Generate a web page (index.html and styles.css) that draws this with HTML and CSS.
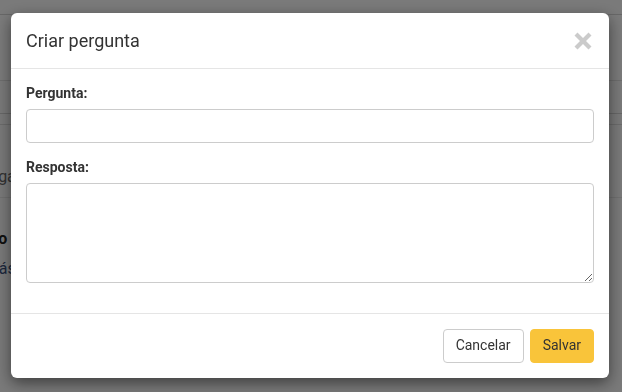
FILE: index.html
```html
<!DOCTYPE html>
<html lang="pt-BR">
<head>
    <meta charset="UTF-8">
    <meta name="viewport" content="width=device-width, initial-scale=1.0">
    <title>Perguntas frequentes</title>
    <link rel="stylesheet" href="styles.css">
</head>
<body>
    <!-- página por trás do modal -->
    <div class="page">
        <div class="strip strip-top"></div>
        <div class="strip strip-nav"></div>
        <div class="strip strip-tabs"></div>
        <div class="strip strip-gap"></div>
        <div class="page-row">
            <span class="page-text">Navegar</span>
        </div>
        <div class="page-item">
            <p class="item-title">Como</p>
            <p class="item-sub">Pagás</p>
        </div>
    </div>

    <div class="backdrop"></div>

    <div class="modal">
        <div class="modal-header">
            <h4 class="modal-title">Criar pergunta</h4>
            <button type="button" class="close" aria-label="Fechar">
                <svg width="18" height="18" viewBox="0 0 18 18">
                    <path d="M3.5 0.5 L9 6 L14.5 0.5 L17.5 3.5 L12 9 L17.5 14.5 L14.5 17.5 L9 12 L3.5 17.5 L0.5 14.5 L6 9 L0.5 3.5 Z" fill="#cbcbcb"/>
                </svg>
            </button>
        </div>
        <form class="modal-body">
            <div class="form-group">
                <label for="pergunta">Pergunta:</label>
                <input type="text" id="pergunta" class="form-control">
            </div>
            <div class="form-group">
                <label for="resposta">Resposta:</label>
                <textarea id="resposta" class="form-control"></textarea>
            </div>
        </form>
        <div class="modal-footer">
            <button type="button" class="btn btn-default">Cancelar</button>
            <button type="button" class="btn btn-warning">Salvar</button>
        </div>
    </div>
</body>
</html>
```

FILE: styles.css
```css
/* base */
* {
    box-sizing: border-box;
}

body {
    margin: 0;
    font-family: Roboto, "Liberation Sans", sans-serif;
    font-size: 14px;
    line-height: 1.42857;
    color: #333;
    background: #f5f5f5;
    overflow: hidden;
}

/* página de fundo */
.page {
    height: 392px;
}

.strip {
    border-bottom: 1px solid #dcdcdc;
}

.strip-top {
    height: 15px;
    border-bottom-color: #cfcfcf;
}

.strip-nav {
    height: 66px;
    background: #f7f7f7;
}

.strip-tabs {
    height: 33px;
    border-bottom-color: #cfcfcf;
}

.strip-gap {
    height: 11px;
    border-bottom-color: #d8d8d8;
}

.page-row {
    height: 73px;
    padding-top: 41px;
    border-bottom: 1px solid #e2e2e2;
}

.page-text {
    margin-left: -38px;
    color: #666;
    font-size: 16px;
}

.page-item {
    padding-top: 30px;
}

.item-title {
    margin: 0 0 7px -35px;
    font-size: 16px;
    font-weight: 700;
    color: #222;
}

.item-sub {
    margin: 0 0 0 -29px;
    font-size: 16px;
    color: #3a4f7a;
}

.backdrop {
    position: fixed;
    inset: 0;
    background: rgba(0, 0, 0, 0.5);
}

/* modal */
.modal {
    position: fixed;
    top: 13px;
    left: 11px;
    width: 598px;
    background: #fff;
    border-radius: 6px;
    box-shadow: 0 5px 15px rgba(0, 0, 0, 0.5);
}

.modal-header {
    display: flex;
    align-items: center;
    justify-content: space-between;
    padding: 15px;
    border-bottom: 1px solid #e5e5e5;
}

.modal-title {
    margin: 0;
    font-size: 18px;
    font-weight: 400;
    line-height: 25px;
    color: #333;
}

.close {
    display: flex;
    padding: 0;
    margin-right: 2px;
    border: 0;
    background: none;
    cursor: pointer;
}

.modal-body {
    margin: 0;
    padding: 15px;
}

.form-group {
    margin-bottom: 15px;
}

label {
    display: block;
    margin-bottom: 5px;
    font-weight: 700;
}

.form-control {
    display: block;
    width: 100%;
    height: 34px;
    padding: 6px 12px;
    font-family: inherit;
    font-size: 14px;
    color: #555;
    background: #fff;
    border: 1px solid #ccc;
    border-radius: 4px;
    outline: none;
}

textarea.form-control {
    height: 100px;
    resize: vertical;
}

.modal-footer {
    display: flex;
    justify-content: flex-end;
    gap: 6px;
    padding: 15px;
    border-top: 1px solid #e5e5e5;
}

.btn {
    height: 34px;
    padding: 6px 12px;
    font-family: inherit;
    font-size: 14px;
    line-height: 1.42857;
    border: 1px solid transparent;
    border-radius: 4px;
    cursor: pointer;
}

.btn-default {
    color: #333;
    background: #fff;
    border-color: #ccc;
}

.btn-warning {
    color: #333;
    background: #f9c43a;
    border-color: #f9c43a;
}
```
